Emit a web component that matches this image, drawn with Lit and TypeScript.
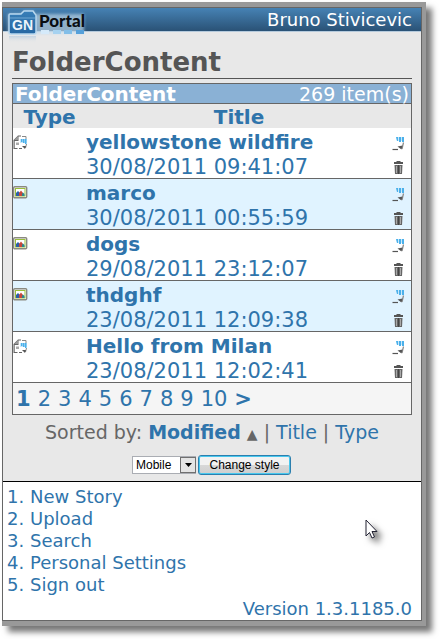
import { LitElement, html, css, svg } from "lit";
import { customElement, property } from "lit/decorators.js";

type Kind = "story" | "image";
interface Item { kind: Kind; title: string; date: string; }

const ITEMS: Item[] = [
  { kind: "story", title: "yellowstone wildfire", date: "30/08/2011 09:41:07" },
  { kind: "image", title: "marco", date: "30/08/2011 00:55:59" },
  { kind: "image", title: "dogs", date: "29/08/2011 23:12:07" },
  { kind: "image", title: "thdghf", date: "23/08/2011 12:09:38" },
  { kind: "story", title: "Hello from Milan", date: "23/08/2011 12:02:41" },
];
const PAGES = ["2", "3", "4", "5", "6", "7", "8", "9", "10"];
const MENU = ["New Story", "Upload", "Search", "Personal Settings", "Sign out"];

const ART = {
  story: svg`
    <path d="M0.500 6L5 1.500H8V2.500H5.500V7H1.700V14H4.500V15H0.500Z" fill="#666"/>
    <path d="M5 2V6H1Z" fill="#999"/>
    <path d="M3 8.500H6V11H3Z" fill="#aaa"/>
    <path d="M9 2.500H13V5" fill="none" stroke="#888"/>
    <path d="M7 5H14V9H7Z" fill="#c9e8fa"/>
    <path d="M8 5H9.500V8H8ZM10 5H11.500V9H10ZM12 5H13.500V10H12Z" fill="#4bb0ea"/>
    <path d="M6 14.500H9" stroke="#666"/>
    <path d="M13.500 10L12.500 14" stroke="#888"/>
    <path d="M9 12H13L12 15Z" fill="#555"/>`,
  image: svg`
    <rect x="0.700" y="1.700" width="13" height="11" rx="1" fill="#fff" stroke="#8a8a80" stroke-width="1.400"/>
    <rect x="2.500" y="3.500" width="9.500" height="7.500" fill="#fff" stroke="#9abf3a"/>
    <path d="M3 11V8L5 6L7 8V11Z" fill="#2b5fa8"/>
    <path d="M6 11V8L8 5.500L10 8V11Z" fill="#c8483c"/>
    <path d="M9 11V8.500L10 7.500L11.500 9V11Z" fill="#2a8790"/>`,
  edit: svg`
    <path d="M4 1H12V5H5Z" fill="#c9e8fa"/>
    <path d="M4 1H6V5H5ZM7 1H9V6H7ZM10 1H12V6H10Z" fill="#4bb0ea"/>
    <path d="M0.500 13.500H6" stroke="#555" stroke-width="1.200"/>
    <path d="M11.500 6.500L10 13" stroke="#888" stroke-width="1.200"/>
    <path d="M5.500 10.500L10.500 9.500L9.500 13.500Z" fill="#555"/>`,
  trash: svg`
    <path d="M4.500 1H8.500V2H11V4H2V2H4.500Z" fill="#555"/>
    <path d="M2.500 5H10.500L10 14H3Z" fill="#666"/>
    <path d="M4.500 6V13M8.500 6V13" stroke="#aaa"/>
    <path d="M6.500 5V14" stroke="#444"/>`,
};

@customElement("gn-icon")
class GnIcon extends LitElement {
  @property() name: keyof typeof ART = "story";
  static styles = css`
    :host { display: block; width: 15px; height: 16px; }
    svg { display: block; }
  `;
  render() {
    return html`<svg width="15" height="16" viewBox="0 0 15 16" aria-hidden="true">${ART[this.name]}</svg>`;
  }
}

@customElement("app-root")
class AppRoot extends LitElement {
  static styles = css`
    * { box-sizing: border-box; }
    :host {
      display: block;
      padding: 2px 14px 14px 2px;
      background: #fff;
      color: #666;
      font-family: "DejaVu Sans", Verdana, sans-serif;
      font-size: 18px;
      line-height: 22px;
    }
    a { color: #2f74ab; text-decoration: none; }
    .frame {
      position: relative;
      padding: 5px 4px 5px 0;
      background: #999;
      box-shadow: 6px 6px 6px #777;
    }
    .page { border: 1px solid #666; background: #fff; }
    .top {
      display: flex;
      justify-content: space-between;
      height: 24px;
      padding: 0 9px 0 1px;
      background: linear-gradient(#4682b4, #2a5276);
      border-bottom: 1px solid #b5cadc;
      color: #fff;
      line-height: 24px;
    }
    .logo { display: block; flex: none; }
    .word { font-family: Lato, sans-serif; font-weight: 900; font-size: 17px; }
    .gn { font-family: "Liberation Sans", sans-serif; font-size: 14px; font-weight: bold; }
    .main { padding: 15px 9px 6px; background: #e8e8e8; border-bottom: 1px solid #000; }
    h1 {
      margin: 0 0 4px;
      border-bottom: 1px solid #555;
      color: #555;
      font-size: 26px;
      line-height: 31px;
    }
    .box { border: 1px solid #666; }
    .bar {
      display: flex;
      justify-content: space-between;
      height: 20px;
      padding: 0 2px;
      border-bottom: 1px solid #666;
      background: #8ab1d5;
      color: #fff;
      font-size: 19px;
      line-height: 20px;
    }
    h2 { margin: 0; font-size: 20px; line-height: 20px; }
    table { width: 100%; border-collapse: separate; border-spacing: 0; table-layout: fixed; font-size: 21px; line-height: 25px; }
    .kind { width: 73px; }
    .tools { width: 19px; }
    th { padding: 2px 0 0; color: #2f74ab; font-size: 20px; line-height: 22px; }
    td { height: 51px; padding: 2px 0 0; background: #fff; border-bottom: 1px solid #666; vertical-align: top; }
    tr:nth-child(even) td { background: #e0f3ff; }
    td > gn-icon { margin-top: 4px; }
    .name { display: block; font-weight: bold; font-size: 20px; }
    .date { display: block; margin-bottom: -2px; color: #2f74ab; }
    button.tool { display: block; width: 15px; height: 24px; padding: 4px 0 0; border: 0; background: none; }
    .pages { display: flex; gap: 7px; padding: 2px 3px 0; height: 31px; background: #f5f5f5; font-size: 21px; line-height: 28px; }
    .sort { margin: 6px 0 10px; text-align: center; font-size: 19px; }
    .up { font-size: 14px; }
    .style { display: flex; justify-content: center; align-items: center; gap: 2px; margin: 0; padding-right: 1px; }
    .pick { position: relative; display: block; }
    select, .change {
      display: block;
      margin: 0;
      color: #000;
      font-family: "Liberation Sans", Arial, sans-serif;
      font-size: 12px;
      line-height: 16px;
    }
    select {
      appearance: none;
      width: 64px;
      height: 18px;
      padding: 0 18px 0 3px;
      border: 1px solid #aaadb3;
      border-radius: 0;
      background: #fff;
    }
    .arrow { position: absolute; right: 0; top: 1px; pointer-events: none; }
    .change {
      width: 93px;
      height: 20px;
      padding: 0;
      border: 1px solid #2c7fae;
      border-radius: 3px;
      background: linear-gradient(#f2f2f2 50%, #d8d8d8 50%, #cfcfcf);
      box-shadow: inset 0 0 0 1px #48c8ee;
    }
    ol { margin: 0; padding: 4px 0 0 27px; color: #2f74ab; }
    .version { margin: 2px 9px 0; text-align: right; color: #2f74ab; }
    .cursor { position: absolute; left: 363px; top: 517px; filter: drop-shadow(5px 5px 3px #777); }
  `;

  render() {
    return html`
      <div class="frame">
        <div class="page">
          <header class="top">
            <svg class="logo" width="90" height="36" viewBox="0 0 90 36" role="img" aria-label="GN Portal">
              <defs>
                <linearGradient id="folder" x2="0" y2="1">
                  <stop offset="0" stop-color="#397fb8"/><stop offset="1" stop-color="#2667a2"/>
                </linearGradient>
                <linearGradient id="fade" x2="0" y2="1">
                  <stop offset="0" stop-color="#a9c4dc"/><stop offset="1" stop-color="#e8e8e8" stop-opacity="0"/>
                </linearGradient>
                <filter id="glow" x="-20%" y="-30%" width="140%" height="160%"><feGaussianBlur stdDeviation="1.500"/></filter>
              </defs>
              <path d="M4 6H17L20 3H30V6H80V26H4Z" fill="#c3dbed" opacity=".65" filter="url(#glow)"/>
              <path d="M5 28H32V35H5Z" fill="url(#fade)" opacity=".6"/>
              <path d="M5 7Q5 6 6 6H17L20 3H29L31 6Q32 6 32 8V24Q32 26 30 26H7Q5 26 5 24Z" fill="url(#folder)" stroke="#b8d8ef" stroke-width="1.500"/>
              <path d="M6 10H31" stroke="#70a8d3"/>
              <text class="gn" x="8" y="22" fill="#eef6fc">GN</text>
              <text class="word" x="35" y="19" fill="#0a0d12">Portal</text>
              <path d="M37 22H45V26H37Z" fill="#d5eafa"/><path d="M49 22H57V26H49Z" fill="#a6d2f0"/>
              <path d="M60 22H68V26H60Z" fill="#82bee8"/><path d="M72 22H80V26H72Z" fill="#55a0da"/>
            </svg>
            <span>Bruno Stivicevic</span>
          </header>
          <main class="main">
            <h1>FolderContent</h1>
            <section class="box">
              <div class="bar"><h2>FolderContent</h2><span>269 item(s)</span></div>
              <table>
                <colgroup><col class="kind"><col><col class="tools"></colgroup>
                <thead><tr><th scope="col">Type</th><th scope="col">Title</th><th></th></tr></thead>
                <tbody>
                  ${ITEMS.map((item) => html`
                    <tr>
                      <td><gn-icon name=${item.kind}></gn-icon></td>
                      <td><a class="name" href="#">${item.title}</a><span class="date">${item.date}</span></td>
                      <td>
                        <button class="tool" aria-label="Edit"><gn-icon name="edit"></gn-icon></button>
                        <button class="tool" aria-label="Delete"><gn-icon name="trash"></gn-icon></button>
                      </td>
                    </tr>`)}
                </tbody>
              </table>
              <nav class="pages">
                <a href="#"><b>1</b></a>
                ${PAGES.map((p) => html`<a href="#">${p}</a>`)}
                <a href="#"><b>&gt;</b></a>
              </nav>
            </section>
            <div class="sort">Sorted by: <a href="#"><b>Modified</b></a> <span class="up">▲</span> | <a href="#">Title</a> | <a href="#">Type</a></div>
            <form class="style" @submit=${(e: Event) => e.preventDefault()}>
              <label class="pick">
                <select aria-label="Style"><option>Mobile</option></select>
                <svg class="arrow" width="16" height="16" viewBox="0 0 16 16" aria-hidden="true">
                  <rect x="0.500" y="0.500" width="15" height="15" fill="#e4e4e4" stroke="#707070"/>
                  <path d="M5 6H12L8.500 10Z" fill="#000"/>
                </svg>
              </label>
              <button class="change">Change style</button>
            </form>
          </main>
          <ol>${MENU.map((m) => html`<li><a href="#">${m}</a></li>`)}</ol>
          <div class="version">Version 1.3.1185.0</div>
        </div>
        <svg class="cursor" width="13" height="20" viewBox="0 0 13 20" aria-hidden="true">
          <path d="M1 1V17L4.500 13.500L7 19L9.500 18L7 12.500H12Z" fill="#fff" stroke="#223"/>
        </svg>
      </div>`;
  }
}
